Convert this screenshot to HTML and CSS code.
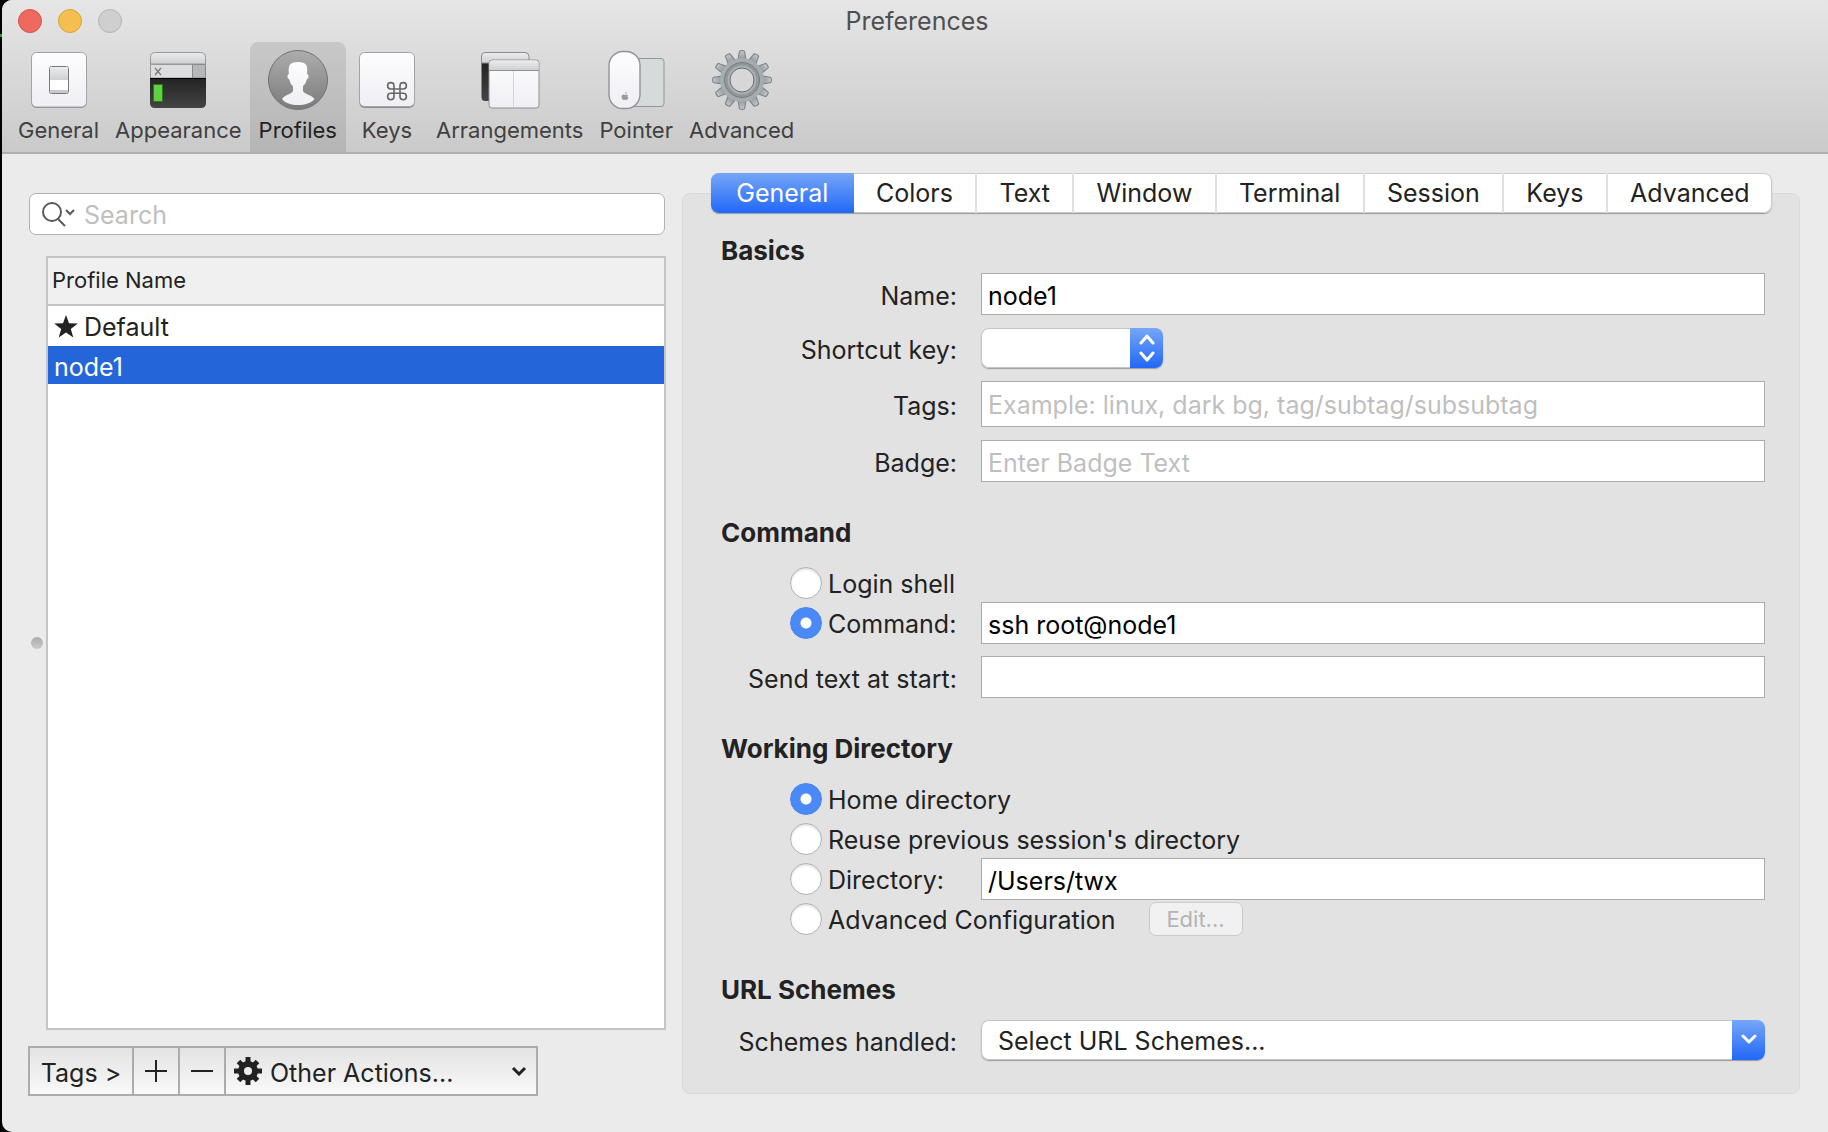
FILE: index.html
```html
<!DOCTYPE html>
<html lang="en">
<head>
	<meta charset="UTF-8">
	<meta name="viewport" content="width=device-width, initial-scale=1.0">
	<title>Preferences</title>
	<link rel="stylesheet" href="styles.css">
</head>
<body>
	<div class="window">
		<header class="titlebar">
			<div class="title-row">
				<div class="lights">
					<button class="light close" aria-label="Close"></button>
					<button class="light minimize" aria-label="Minimize"></button>
					<button class="light zoom" aria-label="Zoom" disabled></button>
				</div>
				<h1>Preferences</h1>
			</div>
			<nav class="toolbar">
				<button class="tool">
					<svg width="60" height="60" viewBox="0 0 60 60">
						<defs>
							<linearGradient id="white" x1="0" y1="0" x2="0" y2="1"><stop offset="0" stop-color="#fdfdfe"/><stop offset="1" stop-color="#efeff4"/></linearGradient>
							<linearGradient id="bar" x1="0" y1="0" x2="0" y2="1"><stop offset="0" stop-color="#ececee"/><stop offset="1" stop-color="#cfd0d2"/></linearGradient>
							<linearGradient id="dark" x1="0" y1="0" x2="0" y2="1"><stop offset="0" stop-color="#222"/><stop offset="1" stop-color="#444"/></linearGradient>
							<linearGradient id="steel" x1="0" y1="0" x2="0" y2="1"><stop offset="0" stop-color="#c3ccd0"/><stop offset="1" stop-color="#84888a"/></linearGradient>
						</defs>
						<rect x="2.5" y="3" width="55" height="55" rx="5" fill="#8c8c8f"/>
						<rect x="2.5" y="2.5" width="55" height="54.5" rx="5" fill="url(#white)" stroke="#a3a3a6"/>
						<rect x="20.5" y="16.5" width="19" height="27" rx="2" fill="#fff" stroke="#77787a"/>
						<path d="M21 17h18v13H21z" fill="url(#bar)"/>
						<path d="M21 40h18v3H21z" fill="#c8c9c9"/>
					</svg>
					<span>General</span>
				</button>
				<button class="tool">
					<svg width="60" height="60" viewBox="0 0 60 60">
						<path d="M2 28h56v25q0 5-5 5H7q-5 0-5-5z" fill="url(#dark)"/>
						<path d="M2.5 14V7.5q0-5 5-5h45q5 0 5 5V14z" fill="url(#bar)" stroke="#999"/>
						<path d="M2.5 14.5h42V28h-42z" fill="#dcddde" stroke="#999"/>
						<path d="M44.5 14.5h13V28h-13z" fill="#b6b7b9" stroke="#888"/>
						<path d="M2 28.5h56" stroke="#000"/>
						<path d="M7 18l6 7M13 18l-6 7" stroke="#777" stroke-width="1.2"/>
						<rect x="5" y="34" width="10" height="18" rx="1" fill="#2b7a1c"/>
						<rect x="6" y="35" width="8" height="16" fill="#5fd042"/>
					</svg>
					<span>Appearance</span>
				</button>
				<button class="tool active">
					<svg width="60" height="60" viewBox="0 0 60 60">
						<defs><linearGradient id="disc" x1="0" y1="0" x2="0" y2="1"><stop offset="0" stop-color="#adadad"/><stop offset="1" stop-color="#7b7b7b"/></linearGradient></defs>
						<circle cx="30" cy="30" r="29.5" fill="url(#disc)" stroke="#717171"/>
						<path d="M14 49C16 45 24 44 25 41V36C22 34 22 31 21 29C19 29 19 24 21 24C20 16 21 12 30 12C39 12 40 16 39 24C41 24 41 29 39 29C38 31 38 34 35 36V41C36 44 44 45 46.5 49C40 57 20 57 14 49Z" fill="url(#white)"/>
					</svg>
					<span>Profiles</span>
				</button>
				<button class="tool">
					<svg width="60" height="60" viewBox="0 0 60 60">
						<rect x="2.5" y="4" width="55" height="54" rx="5" fill="#8c8c8f"/>
						<rect x="2.5" y="2.5" width="55" height="54" rx="5" fill="url(#white)" stroke="#a3a3a6"/>
						<path d="M37 37v9.5a3.2 3.2 0 1 1-3.2-3.2h12.4a3.2 3.2 0 1 1-3.2 3.2V35.8a3.2 3.2 0 1 1 3.2 3.2H33.800a3.2 3.2 0 1 1 3.2-3.2z" fill="none" stroke="#666" stroke-width="1.6"/>
					</svg>
					<span>Keys</span>
				</button>
				<button class="tool">
					<svg width="60" height="60" viewBox="0 0 60 60">
						<path d="M1.5 13h10v38H5q-3.5 0-3.5-4z" fill="url(#dark)"/>
						<path d="M1.5 13V6q0-3.5 3.5-3.5h40q4 0 4 4V13z" fill="url(#bar)" stroke="#8b8b8d"/>
						<rect x="9" y="10" width="50" height="48" rx="3" fill="url(#white)" stroke="#919193"/>
						<path d="M9.5 20v-7q0-2.5 3-2.5h43q3 0 3 2.5v7z" fill="url(#bar)"/>
						<path d="M9 20.5h50" stroke="#8f9092"/>
						<path d="M33.5 21v36" stroke="#d5d5d8"/>
					</svg>
					<span>Arrangements</span>
				</button>
				<button class="tool">
					<svg width="60" height="60" viewBox="0 0 60 60">
						<rect x="14" y="8.5" width="44" height="48" rx="3" fill="#d6dada" stroke="#929696"/>
						<rect x="3" y="1.5" width="31" height="57" rx="14" fill="url(#white)" stroke="#929296" stroke-width="1.4"/>
						<path d="M19 44q0-2 2-2.5q0 2-2 2.5zM22 45q-1.500-1-3 0q-3-1.5-3.5 1.5q0 3 2 3.5q1.5-.6 3 0q1.7-.8 2-2.5q-2-1-.5-2.5z" fill="#9b9b9e"/>
					</svg>
					<span>Pointer</span>
				</button>
				<button class="tool">
					<svg width="60" height="60" viewBox="0 0 60 60">
						<defs><path id="tooth" d="M25.5 12L27.5 1Q30 0 32.5 1L34.5 12z"/></defs>
						<g fill="url(#steel)" stroke="#777f82" stroke-width="1">
							<use href="#tooth"/><use href="#tooth" transform="rotate(30 30 30)"/><use href="#tooth" transform="rotate(60 30 30)"/><use href="#tooth" transform="rotate(90 30 30)"/><use href="#tooth" transform="rotate(120 30 30)"/><use href="#tooth" transform="rotate(150 30 30)"/><use href="#tooth" transform="rotate(180 30 30)"/><use href="#tooth" transform="rotate(210 30 30)"/><use href="#tooth" transform="rotate(240 30 30)"/><use href="#tooth" transform="rotate(270 30 30)"/><use href="#tooth" transform="rotate(300 30 30)"/><use href="#tooth" transform="rotate(330 30 30)"/>
						</g>
						<circle cx="30" cy="30" r="22" fill="#a5adb0"/>
						<circle cx="30" cy="30" r="17.5" fill="#8f979a" stroke="#757d80"/>
						<circle cx="30" cy="30" r="14.5" fill="#a9b0b2"/>
						<circle cx="30" cy="30" r="12" fill="#d7d7d7" stroke="#646b6e"/>
					</svg>
					<span>Advanced</span>
				</button>
			</nav>
		</header>

		<main class="content">
			<aside class="sidebar">
				<div class="search">
					<svg width="34" height="26" viewBox="0 0 34 26" fill="none" stroke="#5a5a5a" stroke-width="2">
						<circle cx="10" cy="11" r="9"/><path d="M16 18l7 7M24 9l4 4 4-4"/>
					</svg>
					<input type="text" placeholder="Search" aria-label="Search">
				</div>
				<div class="profile-list">
					<table>
						<thead>
							<tr><th>Profile Name</th></tr>
						</thead>
						<tbody>
							<tr><td>
								<svg width="24" height="23" viewBox="0 0 24 23"><path d="M12 0l3 8.2 8.800.2-7 5.500 2.500 8.600L12 17.500l-7.300 5 2.500-8.600-7-5.500L9 8.200z" fill="#222"/></svg>Default
							</td></tr>
							<tr class="selected"><td>node1</td></tr>
						</tbody>
					</table>
					<span class="splitter"></span>
				</div>
				<div class="actions">
					<button class="action tags">Tags &gt;</button>
					<button class="action" aria-label="Add profile">
						<svg width="24" height="24" viewBox="0 0 24 24" stroke="#222" stroke-width="2"><path d="M12 1v22M1 12h22"/></svg>
					</button>
					<button class="action" aria-label="Remove profile">
						<svg width="24" height="24" viewBox="0 0 24 24" stroke="#222" stroke-width="2"><path d="M1 12h22"/></svg>
					</button>
					<div class="other">
						<svg class="gear" width="28" height="28" viewBox="0 0 28 28">
							<g stroke="#222" stroke-width="5"><path d="M14 0v28M0 14h28M4.5 4.5l19 19M23.5 4.5l-19 19"/></g>
							<circle cx="14" cy="14" r="10" fill="#222"/><circle cx="14" cy="14" r="4" fill="#eee"/>
						</svg>
						<select aria-label="Other Actions"><option>Other Actions...</option></select>
						<svg class="chevron" width="16" height="10" viewBox="0 0 16 10" fill="none" stroke="#222" stroke-width="3"><path d="M2 2l6 6 6-6"/></svg>
					</div>
				</div>
			</aside>

			<section class="panel">
				<nav class="tabs">
					<button class="tab active">General</button>
					<button class="tab">Colors</button>
					<button class="tab">Text</button>
					<button class="tab">Window</button>
					<button class="tab">Terminal</button>
					<button class="tab">Session</button>
					<button class="tab">Keys</button>
					<button class="tab">Advanced</button>
				</nav>

				<form class="form">
					<div class="group basics">
						<h2>Basics</h2>
						<div class="row">
							<label for="name">Name:</label>
							<input type="text" id="name" value="node1">
						</div>
						<div class="row">
							<label for="shortcut">Shortcut key:</label>
							<div class="popup small">
								<select id="shortcut"><option></option></select>
								<span class="arrow"><svg width="16" height="28" viewBox="0 0 16 28" fill="none" stroke="#fff" stroke-width="3" stroke-linecap="round" stroke-linejoin="round"><path d="M2 9l6-7 6 7M2 19l6 7 6-7"/></svg></span>
							</div>
						</div>
						<div class="row">
							<label for="tags">Tags:</label>
							<input type="text" id="tags" class="tall" placeholder="Example: linux, dark bg, tag/subtag/subsubtag">
						</div>
						<div class="row">
							<label for="badge">Badge:</label>
							<input type="text" id="badge" placeholder="Enter Badge Text">
						</div>
					</div>

					<div class="group">
						<h2>Command</h2>
						<div class="row radio-row">
							<label class="radio"><input type="radio" name="command">Login shell</label>
						</div>
						<div class="row radio-row">
							<label class="radio"><input type="radio" name="command" checked>Command:</label>
							<input type="text" aria-label="Command" value="ssh root@node1">
						</div>
						<div class="row send">
							<label for="send">Send text at start:</label>
							<input type="text" id="send">
						</div>
					</div>

					<div class="group">
						<h2>Working Directory</h2>
						<div class="row radio-row">
							<label class="radio"><input type="radio" name="dir" checked>Home directory</label>
						</div>
						<div class="row radio-row">
							<label class="radio"><input type="radio" name="dir">Reuse previous session's directory</label>
						</div>
						<div class="row radio-row">
							<label class="radio"><input type="radio" name="dir">Directory:</label>
							<input type="text" aria-label="Directory" value="/Users/twx">
						</div>
						<div class="row radio-row wide">
							<label class="radio"><input type="radio" name="dir">Advanced Configuration</label>
							<button type="button" class="edit" disabled>Edit...</button>
						</div>
					</div>

					<div class="group">
						<h2>URL Schemes</h2>
						<div class="row">
							<label for="schemes">Schemes handled:</label>
							<div class="popup">
								<select id="schemes"><option>Select URL Schemes...</option></select>
								<span class="arrow"><svg width="18" height="12" viewBox="0 0 18 12" fill="none" stroke="#fff" stroke-width="3" stroke-linecap="round" stroke-linejoin="round"><path d="M3 2l6 6 6-6"/></svg></span>
							</div>
						</div>
					</div>
				</form>
			</section>
		</main>
	</div>
</body>
</html>
```
FILE: styles.css
```css
* {
	box-sizing: border-box;
}
body {
	margin: 0;
	padding-left: 2px;
	/* a bit of the terminal shows behind the window */
	background: linear-gradient(#2f9c1a, #2f9c1a) 0 34px / 2px 3px no-repeat #000;
	font-family: Inter, "Liberation Sans", sans-serif;
	font-size: 25px;
	line-height: 30px;
	color: #222;
}
button, input, select {
	font: inherit;
	color: inherit;
	margin: 0;
	border-radius: 0;
}
svg {
	display: block;
	flex: none;
}
.window {
	display: flex;
	flex-direction: column;
	min-height: 100vh;
	background-color: #ebebeb;
	border-radius: 10px 0 0 10px;
	overflow: hidden;
}

/* title bar */
.titlebar {
	background: linear-gradient(#e6e6e6, #cacaca);
	border-bottom: 2px solid #adadad;
}
.title-row {
	display: grid;
	grid-template-columns: 1fr auto 1fr;
	align-items: center;
	height: 42px;
	padding: 0 12px 0 16px;
}
.lights {
	display: flex;
	gap: 16px;
}
.light {
	width: 24px;
	height: 24px;
	padding: 0;
	border: 1px solid #b4b4b4;
	border-radius: 50%;
	background-color: #cfcfcf;
}
.light.close {
	background-color: #ee6a5f;
	border-color: #d5544a;
}
.light.minimize {
	background-color: #f5bf4f;
	border-color: #d8a13a;
}
h1 {
	margin: 0;
	font-size: 25px;
	font-weight: 400;
	color: #4f4f4f;
}
.toolbar {
	display: flex;
	padding-left: 8px;
}
.tool {
	display: flex;
	flex-direction: column;
	align-items: center;
	gap: 5px;
	min-width: 82px;
	height: 110px;
	padding: 8px 8px 0;
	border: none;
	background: none;
	font-size: 22px;
	color: #404040;
}
.tool.active {
	padding: 8px 9px 0;
	background: linear-gradient(#c8c8c8, #b5b5b5);
	border-radius: 8px 8px 0 0;
	color: #222;
}

/* profile list */
.content {
	flex: 1;
	display: flex;
	gap: 16px;
	padding: 39px 28px 36px 26px;
}
.sidebar {
	flex: none;
	width: 638px;
	display: flex;
	flex-direction: column;
}
.search {
	display: flex;
	align-items: center;
	gap: 8px;
	height: 42px;
	margin: 0 1px;
	padding: 0 12px;
	border: 1px solid #b2b2b2;
	border-radius: 7px;
	background-color: #fff;
}
.search input {
	flex: 1;
	min-width: 0;
	padding: 2px 0 0;
	border: none;
	outline: none;
	background: none;
}
::placeholder {
	color: #bfbfbf;
	opacity: 1;
}
.profile-list {
	position: relative;
	flex: 1;
	margin: 21px 0 16px 18px;
	border: 2px solid #c4c4c4;
	background-color: #fff;
}
.profile-list table {
	width: 100%;
	border-collapse: collapse;
}
.profile-list th {
	height: 47px;
	padding: 0 4px 2px;
	border-bottom: 2px solid #c4c4c4;
	background-color: #f0f0f0;
	font-size: 22px;
	font-weight: 400;
	text-align: left;
}
.profile-list td {
	height: 41px;
	padding: 1px 6px 0;
}
.profile-list td svg {
	display: inline-block;
	margin-right: 6px;
	vertical-align: -2px;
}
.profile-list .selected {
	background-color: #2466da;
	color: #fff;
}
.profile-list .selected td {
	height: 38px;
	padding-top: 3px;
}
.splitter {
	position: absolute;
	left: -17px;
	top: 50%;
	width: 12px;
	height: 12px;
	margin-top: -6px;
	border-radius: 50%;
	background: linear-gradient(#ababab, #cacaca);
}
.actions {
	display: flex;
	align-self: flex-start;
	height: 50px;
	border: 2px solid #acacac;
	background: linear-gradient(#e3e3e3, #f9f9f9);
}
.action {
	display: flex;
	align-items: center;
	justify-content: center;
	width: 46px;
	padding: 0;
	border: none;
	border-right: 2px solid #acacac;
	background: none;
}
.action.tags {
	width: 104px;
	padding-top: 4px;
}
.other {
	position: relative;
	width: 310px;
}
.other select {
	width: 100%;
	height: 100%;
	padding: 4px 30px 0 44px;
	border: none;
	background: none;
	appearance: none;
}
.gear {
	position: absolute;
	left: 8px;
	top: 9px;
	pointer-events: none;
}
.chevron {
	position: absolute;
	right: 9px;
	top: 18px;
	pointer-events: none;
}

/* settings panel */
.panel {
	flex: 1;
	min-width: 0;
	margin-bottom: 2px;
	border: 1px solid #dadada;
	border-radius: 8px;
	background-color: #e2e2e2;
}
.tabs {
	display: flex;
	height: 40px;
	margin: -21px 27px 0 28px;
	border-radius: 8px;
	background-color: #fff;
	box-shadow: 0 0 0 1px #c9c9c9 inset, 0 1px 1px #9c9c9c;
}
.tab {
	flex: 1 1 auto;
	padding: 0;
	border: none;
	border-right: 2px solid #e0e0e0;
	background: none;
}
.tab:last-child {
	border-right: none;
}
.tab.active {
	padding: 0 3px;
	border-right: none;
	border-radius: 8px 0 0 8px;
	background: linear-gradient(#76a6f7, #2168f8);
	color: #fff;
}
.form {
	display: flex;
	flex-direction: column;
	gap: 36px;
	padding: 23px 34px 0 38px;
}
.group h2 {
	margin: 0 0 15px;
	font-size: 26px;
	font-weight: 700;
}
.basics h2 {
	margin-bottom: 7px;
}
.row {
	display: grid;
	grid-template-columns: 236px minmax(0, 1fr);
	column-gap: 24px;
	align-items: center;
}
.basics .row + .row, .send {
	margin-top: 13px;
}
.row label {
	padding-top: 3px;
	text-align: right;
	white-space: nowrap;
}
.row input[type="text"] {
	width: 100%;
	height: 42px;
	padding: 4px 6px 0;
	border: 1px solid #ababab;
	background-color: #fff;
	color: #000;
}
.row input.tall {
	height: 46px;
	padding-top: 2px;
}
.radio-row {
	grid-template-rows: 40px;
	height: 40px;
}
.row label.radio {
	display: flex;
	align-items: flex-end;
	gap: 6px;
	padding: 0 0 0 69px;
}
input[type="radio"] {
	flex: none;
	width: 32px;
	height: 32px;
	border: 1px solid #b0b0b0;
	border-radius: 50%;
	background-color: #fff;
	box-shadow: 0 2px 2px #e6e6e6 inset;
	appearance: none;
}
input[type="radio"]:checked {
	border-color: #4484f5;
	background: radial-gradient(circle, #fff 5px, #4a89f6 6px);
	box-shadow: none;
}
.radio-row.wide {
	display: flex;
	column-gap: 33px;
}
.edit {
	width: 94px;
	height: 34px;
	padding: 0;
	border: 1px solid #cbcbcb;
	border-radius: 7px;
	background-color: #f1f1f1;
	font-size: 22px;
	color: #b4b4b4;
}
.popup {
	position: relative;
	height: 40px;
	border-radius: 8px;
	background-color: #fff;
	box-shadow: 0 0 0 1px #c4c4c4 inset, 0 1px 1px #9c9c9c;
}
.popup.small {
	width: 182px;
}
.popup select {
	width: 100%;
	height: 100%;
	padding: 2px 40px 0 17px;
	border: none;
	background: none;
	appearance: none;
}
.popup .arrow {
	position: absolute;
	top: 0;
	right: 0;
	display: flex;
	align-items: center;
	justify-content: center;
	width: 33px;
	height: 100%;
	border-radius: 0 8px 8px 0;
	background: linear-gradient(#76a6f7, #2168f8);
	pointer-events: none;
}
```
